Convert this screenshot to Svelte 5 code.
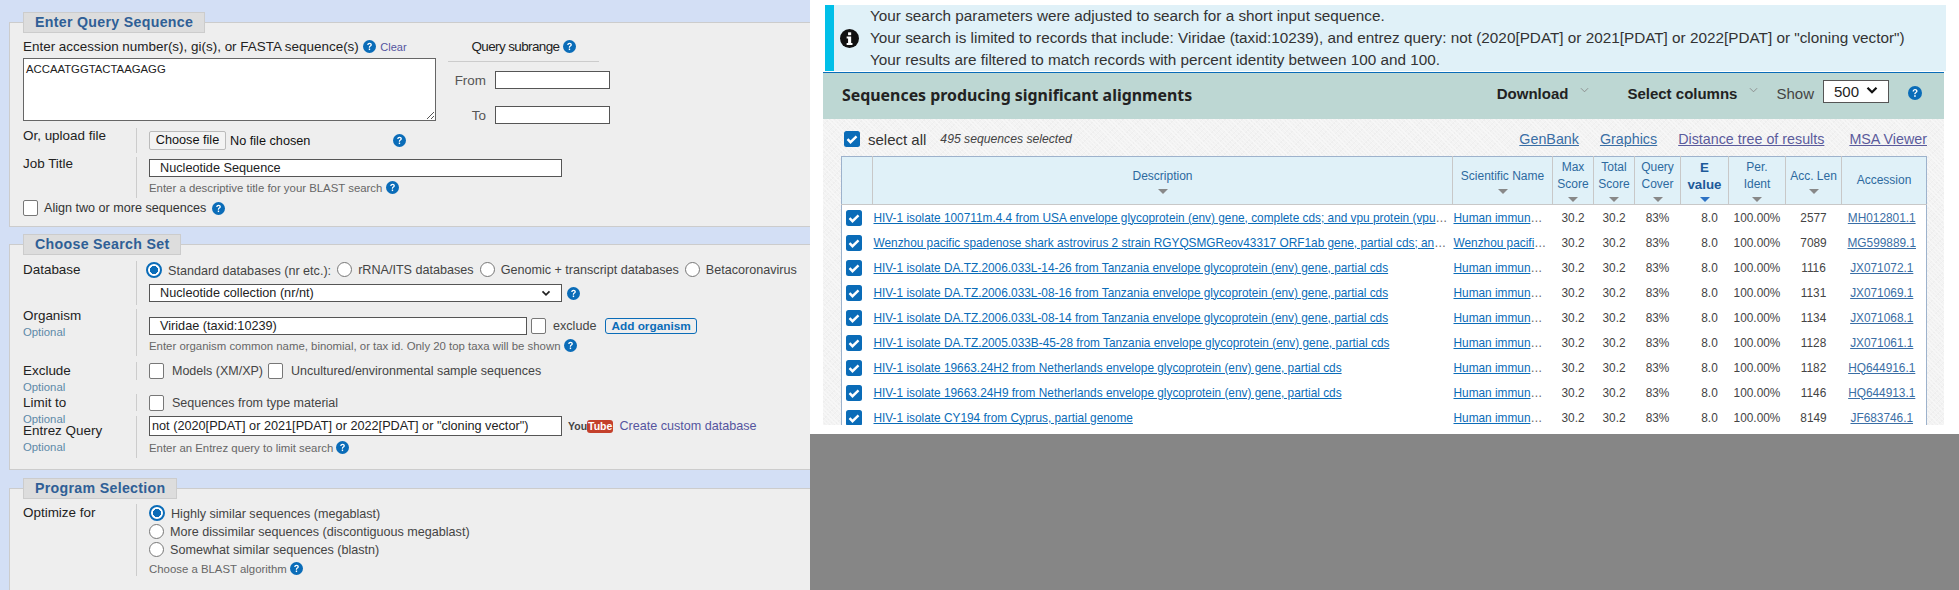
<script>
  const rows = [
    ['HIV-1 isolate 100711m.4.4 from USA envelope glycoprotein (env) gene, complete cds; and vpu protein (vpu) gene, partial cds', 'Human immunodeficiency virus 1', '2577', 'MH012801.1'],
    ['Wenzhou pacific spadenose shark astrovirus 2 strain RGYQSMGReov43317 ORF1ab gene, partial cds; and ORF2 gene, partial cds', 'Wenzhou pacific spadenose shark astrovirus 2', '7089', 'MG599889.1'],
    ['HIV-1 isolate DA.TZ.2006.033L-14-26 from Tanzania envelope glycoprotein (env) gene, partial cds', 'Human immunodeficiency virus 1', '1116', 'JX071072.1'],
    ['HIV-1 isolate DA.TZ.2006.033L-08-16 from Tanzania envelope glycoprotein (env) gene, partial cds', 'Human immunodeficiency virus 1', '1131', 'JX071069.1'],
    ['HIV-1 isolate DA.TZ.2006.033L-08-14 from Tanzania envelope glycoprotein (env) gene, partial cds', 'Human immunodeficiency virus 1', '1134', 'JX071068.1'],
    ['HIV-1 isolate DA.TZ.2005.033B-45-28 from Tanzania envelope glycoprotein (env) gene, partial cds', 'Human immunodeficiency virus 1', '1128', 'JX071061.1'],
    ['HIV-1 isolate 19663.24H2 from Netherlands envelope glycoprotein (env) gene, partial cds', 'Human immunodeficiency virus 1', '1182', 'HQ644916.1'],
    ['HIV-1 isolate 19663.24H9 from Netherlands envelope glycoprotein (env) gene, partial cds', 'Human immunodeficiency virus 1', '1146', 'HQ644913.1'],
    ['HIV-1 isolate CY194 from Cyprus, partial genome', 'Human immunodeficiency virus 1', '8149', 'JF683746.1']
  ];
  const cols = [
    { lines: ['Description'], w: 580 },
    { lines: ['Scientific Name'], w: 100 },
    { lines: ['Max', 'Score'], w: 41 },
    { lines: ['Total', 'Score'], w: 41 },
    { lines: ['Query', 'Cover'], w: 46 },
    { lines: ['E', 'value'], w: 48, active: true },
    { lines: ['Per.', 'Ident'], w: 57 },
    { lines: ['Acc. Len'], w: 56 },
    { lines: ['Accession'], w: 85, noSort: true }
  ];
</script>

{#snippet help()}
  <svg class="help" viewBox="0 0 16 16"><circle cx="8" cy="8" r="8" fill="#0a6cb8"/><path d="M5.2 6.2C5.3 4.4 6.5 3.4 8.1 3.4c1.6 0 2.8 1 2.8 2.4 0 1.2-.7 1.7-1.5 2.3-.6.4-.8.7-.8 1.4H7.2c0-1.2.3-1.7 1.100-2.300.6-.4 1-.8 1-1.300 0-.6-.5-1-1.200-1-.8 0-1.300.5-1.400 1.300z" fill="#fff"/><rect x="7.1" y="10.5" width="1.7" height="1.9" fill="#fff"/></svg>
{/snippet}

{#snippet radio(on)}
  <span class="radio" class:on></span>
{/snippet}

{#snippet tick()}
  <svg class="tick" viewBox="0 0 16 16"><rect width="16" height="16" rx="2.5" fill="#0a6cb8"/><path d="M3.5 8.2l3 3L12.5 5.4" fill="none" stroke="#fff" stroke-width="2.4"/></svg>
{/snippet}

<div class="page">
  <div class="left">
    <section class="card one">
      <div class="legend">Enter Query Sequence</div>
      <div class="query">
        <div>
          <div class="q-label">Enter accession number(s), gi(s), or FASTA sequence(s) {@render help()} <span class="clear">Clear</span></div>
          <div class="textarea">ACCAATGGTACTAAGAGG
            <svg class="grip" viewBox="0 0 8 8"><path d="M1 8L8 1M5 8l3-3" stroke="#555" fill="none"/></svg>
          </div>
        </div>
        <div class="subrange">
          <div class="sub-title"><span>Query subrange</span> {@render help()}</div>
          <div class="sub-row"><span>From</span><div class="input small"></div></div>
          <div class="sub-row"><span>To</span><div class="input small"></div></div>
        </div>
      </div>
      <div class="row upload">
        <div class="lab">Or, upload file</div>
        <div class="val line">
          <span class="btn">Choose file</span><span class="nofile">No file chosen</span>{@render help()}
        </div>
      </div>
      <div class="row job">
        <div class="lab">Job Title</div>
        <div class="val">
          <div class="input wide">Nucleotide Sequence</div>
          <div class="hint">Enter a descriptive title for your BLAST search {@render help()}</div>
        </div>
      </div>
      <div class="align"><span class="check"></span>Align two or more sequences {@render help()}</div>
    </section>

    <section class="card two">
      <div class="legend">Choose Search Set</div>
      <div class="row db">
        <div class="lab">Database</div>
        <div class="val">
          <div class="radios">
            <label>{@render radio(true)}Standard databases (nr etc.):</label>
            <label>{@render radio(false)}rRNA/ITS databases</label>
            <label>{@render radio(false)}Genomic + transcript databases</label>
            <label>{@render radio(false)}Betacoronavirus</label>
          </div>
          <div class="line sel">
            <div class="input wide select">Nucleotide collection (nr/nt)
              <svg class="chev" viewBox="0 0 10 8"><path d="M1 1.5l4 4 4-4" fill="none" stroke="#222" stroke-width="2"/></svg>
            </div>
            {@render help()}
          </div>
        </div>
      </div>
      <div class="row org">
        <div class="lab">Organism<small>Optional</small></div>
        <div class="val">
          <div class="line">
            <div class="input org-input">Viridae (taxid:10239)</div>
            <span class="check"></span><span class="excl">exclude</span>
            <span class="add">Add organism</span>
          </div>
          <div class="hint">Enter organism common name, binomial, or tax id. Only 20 top taxa will be shown {@render help()}</div>
        </div>
      </div>
      <div class="row excl-row">
        <div class="lab">Exclude<small>Optional</small></div>
        <div class="val line"><span class="check"></span><span class="t1">Models (XM/XP)</span><span class="check"></span><span class="t1">Uncultured/environmental sample sequences</span></div>
      </div>
      <div class="row limit">
        <div class="lab">Limit to<small>Optional</small></div>
        <div class="val line"><span class="check"></span><span class="t1">Sequences from type material</span></div>
      </div>
      <div class="row entrez">
        <div class="lab">Entrez Query<small>Optional</small></div>
        <div class="val">
          <div class="line">
            <div class="input wide tight">not (2020[PDAT] or 2021[PDAT] or 2022[PDAT] or "cloning vector")</div>
            <span class="yt"><span class="you">You</span><span class="tube">Tube</span></span>
            <span class="custom">Create custom database</span>
          </div>
          <div class="hint">Enter an Entrez query to limit search {@render help()}</div>
        </div>
      </div>
    </section>

    <section class="card three">
      <div class="legend">Program Selection</div>
      <div class="row prog">
        <div class="lab">Optimize for</div>
        <div class="val">
          <label>{@render radio(true)}Highly similar sequences (megablast)</label>
          <label>{@render radio(false)}More dissimilar sequences (discontiguous megablast)</label>
          <label>{@render radio(false)}Somewhat similar sequences (blastn)</label>
          <div class="hint">Choose a BLAST algorithm {@render help()}</div>
        </div>
      </div>
    </section>
  </div>

  <div class="right">
    <div class="results">
      <div class="info">
        <svg class="i" viewBox="0 0 16 16"><circle cx="8" cy="8" r="8" fill="#111"/><rect x="6.8" y="2.8" width="2.6" height="2.4" fill="#fff"/><path d="M5.6 6.4h3.800v5.400h1.100v1.600H5.600v-1.600h1.200V8H5.600z" fill="#fff"/></svg>
        <div>
          <p>Your search parameters were adjusted to search for a short input sequence.</p>
          <p>Your search is limited to records that include: Viridae (taxid:10239), and entrez query: not (2020[PDAT] or 2021[PDAT] or 2022[PDAT] or "cloning vector")</p>
          <p>Your results are filtered to match records with percent identity between 100 and 100.</p>
        </div>
      </div>
      <div class="bar">
        <h2>Sequences producing significant alignments</h2>
        <div class="tools">
          <b>Download</b><svg class="dn" viewBox="0 0 10 6"><path d="M1 1l4 4 4-4" fill="none" stroke="#888"/></svg>
          <b class="sc">Select columns</b><svg class="dn" viewBox="0 0 10 6"><path d="M1 1l4 4 4-4" fill="none" stroke="#888"/></svg>
          <span class="show">Show</span>
          <div class="pager">500<svg viewBox="0 0 10 8"><path d="M1 1.5l4 4 4-4" fill="none" stroke="#111" stroke-width="2"/></svg></div>
          {@render help()}
        </div>
      </div>
      <div class="body">
        <div class="sel-row">
          {@render tick()}
          <span class="all">select all</span>
          <em>495 sequences selected</em>
          <nav>
            <a href="#g">GenBank</a><a href="#h">Graphics</a><a href="#d">Distance tree of results</a><a class="msa" href="#m">MSA Viewer</a>
          </nav>
        </div>
        <table>
          <colgroup>
            <col style="width:31px" />
            {#each cols as c}<col style="width:{c.w}px" />{/each}
          </colgroup>
          <thead>
            <tr>
              <th class="blank"></th>
              {#each cols as c}
                <th class:active={c.active}>
                  {#each c.lines as l}<span class="hl">{l}</span>{/each}
                  {#if !c.noSort}<i class="sort"></i>{/if}
                </th>
              {/each}
            </tr>
          </thead>
          <tbody>
            {#each rows as r}
              <tr>
                <td class="c">{@render tick()}</td>
                <td class="txt"><a href="#r">{r[0]}</a></td>
                <td class="txt"><a href="#s">{r[1]}</a></td>
                <td>30.2</td>
                <td>30.2</td>
                <td>83%</td>
                <td class="ev">8.0</td>
                <td>100.00%</td>
                <td>{r[2]}</td>
                <td class="acc"><a class="ac" href="#a">{r[3]}</a></td>
              </tr>
            {/each}
          </tbody>
        </table>
      </div>
    </div>
    <div class="foot"></div>
  </div>
</div>

<style>
  :global(body) {
    margin: 0;
    background: #fff;
  }

  .page {
    display: flex;
    width: 1959px;
    height: 590px;
    overflow: hidden;
    font-family: "Liberation Sans", Arial, sans-serif;
  }

  .left {
    width: 810px;
    height: 590px;
    flex: none;
    overflow: hidden;
    background: #d3dff5;
    font-size: 13.45px;
    color: #333;
  }

  .card {
    margin-left: 9px;
    padding-left: 13px;
    border: 1px solid #ccc;
    border-right: 0;
    background: #eee;
    box-sizing: border-box;
  }

  .one { margin-top: 22px; height: 205px; }
  .two { margin-top: 17px; height: 226px; }
  .three { margin-top: 18px; height: 110px; }

  .legend {
    width: fit-content;
    height: 21px;
    margin-top: -11px;
    padding: 0 11px;
    box-sizing: border-box;
    background: #ddd;
    border: 1px solid #ccc;
    color: #2f5f96;
    font-size: 14.2px;
    font-weight: bold;
    line-height: 19px;
    letter-spacing: 0.3px;
  }

  .help {
    display: inline-block;
    width: 13px;
    height: 13px;
    vertical-align: -2px;
    flex: none;
  }

  .query {
    display: flex;
    height: 91px;
    padding-top: 5px;
    box-sizing: border-box;
  }

  .q-label {
    height: 20px;
    line-height: 18px;
    color: #222;
  }

  .clear {
    color: #55559f;
    font-size: 11px;
    margin-left: 1px;
  }

  .textarea {
    position: relative;
    width: 413px;
    height: 63px;
    box-sizing: border-box;
    background: #fff;
    border: 1px solid #666;
    padding: 4px 2px;
    font-size: 11.33px;
    color: #222;
  }

  .grip {
    position: absolute;
    right: 1px;
    bottom: 1px;
    width: 8px;
    height: 8px;
  }

  .subrange {
    margin-left: 12px;
    width: 162px;
  }

  .sub-title {
    width: 151px;
    height: 23px;
    border-bottom: 1px solid #ccc;
    text-align: center;
    line-height: 18px;
    color: #222;
    margin-bottom: 9px;
    letter-spacing: -0.6px;
  }

  .sub-row {
    display: flex;
    align-items: center;
    justify-content: flex-end;
    gap: 9px;
    height: 18px;
    margin-bottom: 17px;
    color: #555;
  }

  .input {
    height: 18px;
    box-sizing: border-box;
    background: #fff;
    border: 1px solid #555;
    line-height: 16px;
    padding-left: 10px;
    font-size: 12.7px;
    color: #222;
    white-space: nowrap;
    flex: none;
  }

  .small { width: 115px; }
  .wide { width: 413px; }
  .org-input { width: 378px; }
  .tight { padding-left: 2px; height: 20px; line-height: 18px; }

  .row {
    display: flex;
    color: #222;
  }

  .lab {
    width: 113px;
    flex: none;
    line-height: 17px;
  }

  .lab small {
    display: block;
    color: #5d8aa8;
    font-size: 11.33px;
    line-height: 17px;
  }

  .val {
    border-left: 1px solid #ccc;
    padding-left: 12px;
    flex: 1;
    min-width: 0;
  }

  .line {
    display: flex;
    align-items: center;
  }

  .hint {
    margin-top: 3px;
    font-size: 11.4px;
    color: #666;
    line-height: 16px;
    white-space: nowrap;
  }

  .upload { height: 25px; margin-top: 4px; }
  .upload .lab { margin-top: -1px; }

  .btn {
    height: 19px;
    width: 77px;
    box-sizing: border-box;
    border: 1px solid #bbb;
    border-radius: 2px;
    background: #f3f3f3;
    text-align: center;
    line-height: 17px;
    font-size: 12.7px;
    color: #111;
  }

  .nofile { margin-left: 4px; width: 163px; font-size: 12.7px; color: #111; }

  .job { height: 41px; margin-top: 4px; }
  .job .lab { margin-top: -2px; }
  .job .val { padding-top: 2px; }

  .check {
    display: inline-block;
    width: 15px;
    height: 16px;
    box-sizing: border-box;
    border: 1px solid #777;
    border-radius: 2px;
    background: #fff;
    flex: none;
  }

  .align {
    margin-top: 2px;
    color: #333;
    display: flex;
    align-items: center;
    gap: 6px;
    font-size: 12.6px;
  }

  .radio {
    display: inline-block;
    width: 15px;
    height: 15px;
    box-sizing: border-box;
    border: 1px solid #777;
    border-radius: 50%;
    background: #fff;
    vertical-align: -3px;
    margin-right: 6px;
  }

  .radio.on {
    width: 16px;
    height: 16px;
    border: 2px solid #0a6cb8;
    background: radial-gradient(closest-side, #0a6cb8 66%, #fff 72%);
  }

  label {
    font-size: 12.6px;
    color: #444;
    white-space: nowrap;
  }

  .db { height: 44px; margin-top: 6px; }

  .radios {
    display: flex;
    gap: 6px;
    margin-left: -3px;
    height: 17px;
    line-height: 16px;
    padding-top: 1px;
  }

  .sel { margin-top: 5px; gap: 5px; }
  .select { position: relative; }

  .chev {
    position: absolute;
    right: 10px;
    top: 5px;
    width: 10px;
    height: 7px;
  }

  .org { height: 47px; margin-top: 4px; }
  .org .lab { margin-top: -2px; }
  .org .val { padding-top: 8px; }
  .org .line { gap: 4px; }
  .excl { color: #444; margin: 0 5px 0 3px; font-size: 12.6px; }

  .add {
    height: 16px;
    box-sizing: border-box;
    border: 1px solid #0a6cb8;
    border-radius: 3px;
    color: #0a6cb8;
    font-size: 11.8px;
    font-weight: bold;
    line-height: 14px;
    padding: 0 5px;
    white-space: nowrap;
  }

  .t1 {
    font-size: 12.5px;
    color: #444;
    margin: 0 5px 0 8px;
  }

  .excl-row { height: 18px; margin-top: 6px; }
  .limit { height: 17px; margin-top: 14px; }
  .entrez { height: 42px; margin-top: 5px; }
  .entrez .lab { padding-top: 6px; }
  .entrez .line { gap: 6px; }
  .entrez .hint { margin-top: 4px; }

  .yt {
    display: inline-flex;
    align-items: center;
    font-size: 10.5px;
    font-weight: bold;
    height: 13px;
  }

  .you { color: #444; }

  .tube {
    background: #c4402b;
    color: #fff;
    border-radius: 3px;
    padding: 0 1px;
    line-height: 13px;
  }

  .custom { color: #55559f; white-space: nowrap; font-size: 12.6px; }

  .prog { margin-top: 5px; height: 72px; }
  .prog .val { padding-top: 1px; }
  .prog .val label { display: block; height: 18px; line-height: 18px; }
  .prog .hint { margin-top: 2px; }

  /* results */
  .right {
    flex: 1;
    display: flex;
    flex-direction: column;
    min-width: 0;
    background: #fff;
  }

  .results {
    height: 434px;
    padding: 5px 0 0 13px;
    box-sizing: border-box;
    overflow: hidden;
  }

  .foot {
    flex: 1;
    background: #868686;
  }

  .info {
    display: flex;
    align-items: center;
    width: 1121px;
    height: 66px;
    margin-left: 2px;
    box-sizing: border-box;
    background: #e0f1f8;
    border-left: 9px solid #00bfe8;
    font-size: 15.3px;
    color: #333;
  }

  .i {
    width: 19px;
    height: 19px;
    margin: 0 11px 0 6px;
    flex: none;
  }

  .info p {
    margin: 0;
    line-height: 22px;
    white-space: nowrap;
  }

  .bar {
    width: 1121px;
    height: 47px;
    margin-top: 1px;
    box-sizing: border-box;
    border-top: 1px solid #0a6cb8;
    background: #bdd7d3;
    display: flex;
    align-items: center;
    justify-content: space-between;
    padding: 0 22px 0 19px;
  }

  h2 {
    margin: 0 0 2px;
    font-family: "Noto Sans", sans-serif;
    font-size: 15.9px;
    font-weight: bold;
    color: #222;
  }

  .tools {
    display: flex;
    align-items: center;
    margin-bottom: 6px;
    font-size: 15px;
    color: #222;
  }

  .tools .help {
    width: 14px;
    height: 14px;
    margin-left: 19px;
  }

  .dn {
    width: 9px;
    height: 6px;
    margin: -6px 0 0 12px;
  }

  .sc { margin-left: 38px; }

  .show { margin-left: 18px; color: #444; }

  .pager {
    display: flex;
    align-items: center;
    justify-content: space-between;
    width: 66px;
    height: 23px;
    margin: 0 0 3px 9px;
    padding: 0 10px;
    box-sizing: border-box;
    background: #fff;
    border: 1px solid #555;
  }

  .pager svg {
    width: 12px;
    height: 9px;
    margin-top: -3px;
  }

  .body {
    width: 1121px;
    height: 306px;
    overflow: hidden;
    padding: 12px 0 0 18px;
    box-sizing: border-box;
    background-color: #f3f3f3;
    background-image:
      repeating-linear-gradient(45deg, #f7f7f7 0 1px, transparent 1px 3px),
      repeating-linear-gradient(-45deg, #eeeeee 0 1px, transparent 1px 4px);
  }

  .tick {
    width: 16px;
    height: 16px;
    display: block;
  }

  .sel-row {
    display: flex;
    align-items: center;
    width: 1083px;
    height: 16px;
    margin-left: 3px;
    margin-bottom: 9px;
    font-size: 15px;
    color: #333;
  }

  .all { margin-left: 8px; }

  em {
    margin-left: 14px;
    font-size: 12.2px;
    color: #444;
  }

  nav {
    margin-left: auto;
    display: flex;
    gap: 21px;
    font-size: 14.3px;
  }

  nav a { color: #3a6ea5; }
  nav a:nth-child(n+3) { color: #5b5b9c; }
  nav .msa { margin-left: 4px; }

  table {
    width: 1085px;
    table-layout: fixed;
    border-collapse: collapse;
    background: #fff;
    border: 1px solid #9db2cc;
  }

  th {
    height: 48px;
    padding: 0 1px;
    box-sizing: border-box;
    background: #e0f1f8;
    border-left: 1px solid #c8c8c8;
    border-bottom: 1px solid #c8c8c8;
    color: #2d6a9f;
    font-size: 12px;
    font-weight: normal;
    line-height: 17px;
    text-align: center;
  }

  th.blank { border-left: 0; }

  th.active {
    color: #1d5a99;
    font-weight: bold;
    font-size: 13.33px;
  }

  .hl {
    display: block;
    white-space: nowrap;
  }

  .sort {
    display: block;
    width: 0;
    height: 0;
    margin: 4px auto 0;
    border: 5px solid transparent;
    border-top: 5px solid #888;
    border-bottom: 0;
  }

  .active .sort { border-top-color: #2d72c4; }

  td {
    height: 25px;
    padding: 0;
    text-align: center;
    font-size: 11.85px;
    color: #444;
    white-space: nowrap;
  }

  td.c .tick { margin-left: 4px; }

  td.txt {
    text-align: left;
    overflow: hidden;
    text-overflow: ellipsis;
    padding-right: 4px;
    padding-left: 1px;
    color: #666;
  }

  td a { color: #0a6cb8; }
  td a.ac { color: #3a6ea5; }
  td.ev { padding-left: 10px; }
  td.acc { padding-right: 4px; }
</style>
